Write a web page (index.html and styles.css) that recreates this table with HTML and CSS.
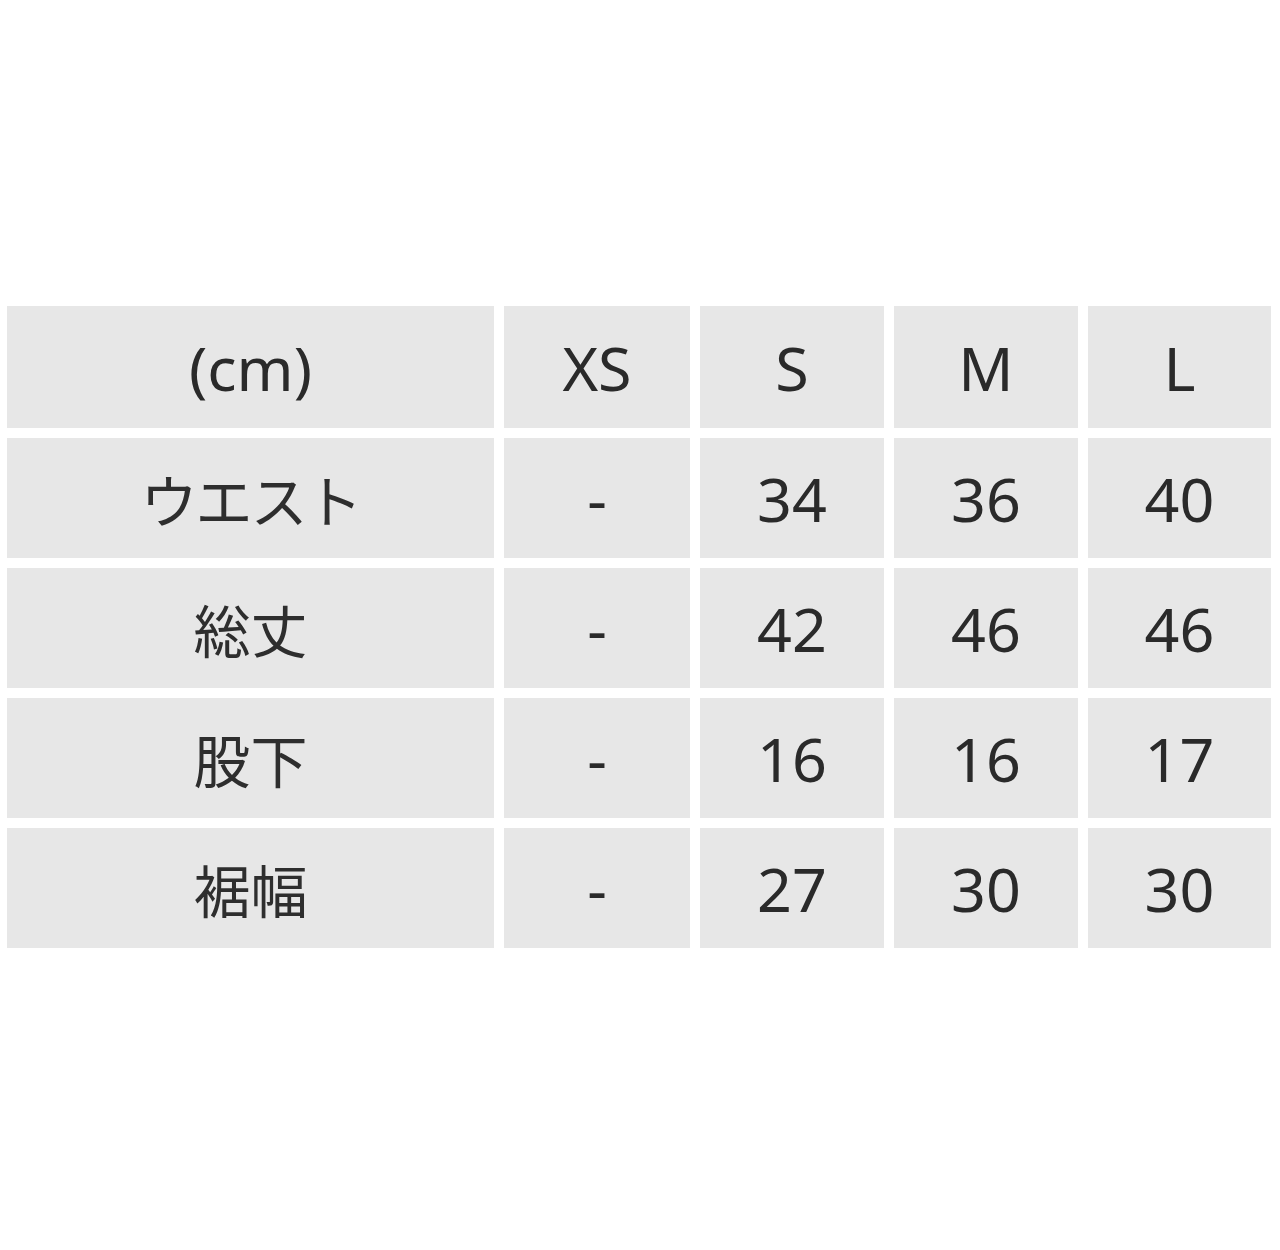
FILE: index.html
```html
<!DOCTYPE html>
<html lang="ja">
<head>
<meta charset="utf-8">
<link rel="stylesheet" href="styles.css">
</head>
<body>
<div class="page">
  <div class="size-table">
    <div class="cell">(cm)</div>
    <div class="cell">XS</div>
    <div class="cell">S</div>
    <div class="cell">M</div>
    <div class="cell">L</div>

    <div class="cell ja kana">ウエスト</div>
    <div class="cell">-</div>
    <div class="cell">34</div>
    <div class="cell">36</div>
    <div class="cell">40</div>

    <div class="cell ja">総丈</div>
    <div class="cell">-</div>
    <div class="cell">42</div>
    <div class="cell">46</div>
    <div class="cell">46</div>

    <div class="cell ja">股下</div>
    <div class="cell">-</div>
    <div class="cell">16</div>
    <div class="cell">16</div>
    <div class="cell">17</div>

    <div class="cell ja">裾幅</div>
    <div class="cell">-</div>
    <div class="cell">27</div>
    <div class="cell">30</div>
    <div class="cell">30</div>
  </div>
</div>
</body>
</html>
```

FILE: styles.css
```css
html, body {
  margin: 0;
  padding: 0;
  background: #ffffff;
}

.page {
  width: 1280px;
  height: 1250px;
  padding: 306px 0 0 7px;
  box-sizing: border-box;
}

.size-table {
  display: grid;
  grid-template-columns: 487px 186px 184px 184px 183px;
  grid-template-rows: 122px 120px 120px 120px 120px;
  column-gap: 10px;
  row-gap: 10px;
}

.cell {
  background: #e7e7e7;
  display: flex;
  align-items: center;
  justify-content: center;
  font-family: "Noto Sans", "Noto Sans CJK JP", sans-serif;
  font-size: 61px;
  font-weight: 400;
  color: #2a2a2a;
  line-height: 1;
}

.ja {
  font-family: "Noto Sans CJK JP", sans-serif;
  font-size: 57px;
  color: #2e2e2e;
}

.kana {
  letter-spacing: -2px;
}
```
